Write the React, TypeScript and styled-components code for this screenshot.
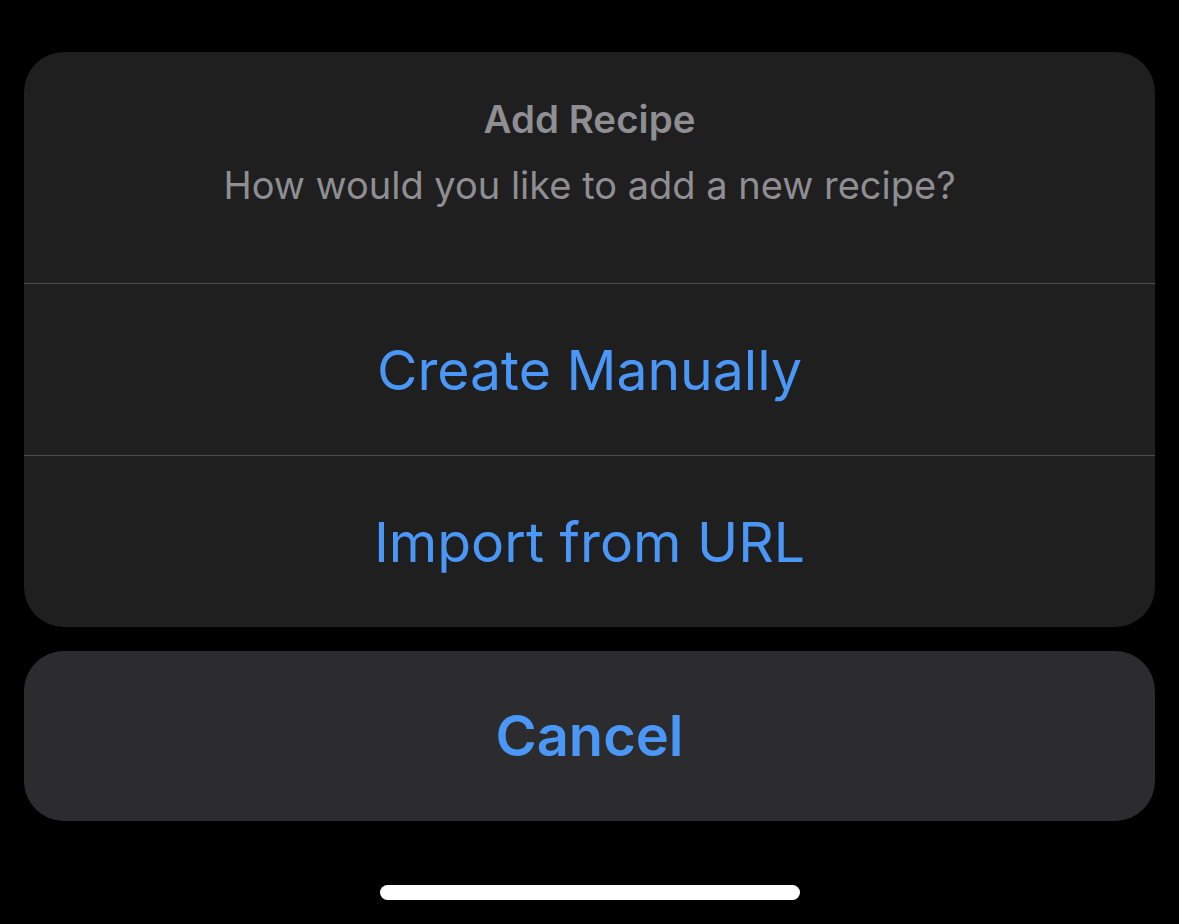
import React from 'react';
import styled, { createGlobalStyle } from 'styled-components';

const GlobalStyle = createGlobalStyle`
  html, body {
    margin: 0;
    padding: 0;
    background: #000;
  }
  body {
    font-family: Inter, "Noto Sans", "Liberation Sans", sans-serif;
    -webkit-font-smoothing: antialiased;
  }
`;

const Screen = styled.div`
  width: 1179px;
  height: 924px;
  background: #000;
  box-sizing: border-box;
  padding: 52px 24px 0;
  display: flex;
  flex-direction: column;
`;

const Sheet = styled.div`
  background: #1f1f1f;
  border-radius: 40px;
  overflow: hidden;
  display: flex;
  flex-direction: column;
`;

const Header = styled.div`
  height: 232px;
  box-sizing: border-box;
  padding-top: 44px;
  display: flex;
  flex-direction: column;
  align-items: center;
  border-bottom: 1px solid #4b4b4d;
`;

const Title = styled.div`
  font-size: 38.5px;
  font-weight: 600;
  color: #8e8e93;
  line-height: 46px;
`;

const Message = styled.div`
  margin-top: 20px;
  font-size: 38px;
  font-weight: 400;
  color: #8e8e93;
  line-height: 46px;
`;

const Action = styled.button<{ $divider?: boolean; $bold?: boolean; $h?: number }>`
  all: unset;
  height: ${p => p.$h ?? 171}px;
  display: flex;
  align-items: center;
  justify-content: center;
  font-family: Inter, "Noto Sans", "Liberation Sans", sans-serif;
  font-size: ${p => (p.$bold ? 56 : 55.3)}px;
  font-weight: ${p => (p.$bold ? 600 : 400)};
  color: #4a97f8;
  border-bottom: ${p => (p.$divider ? '1px solid #4b4b4d' : 'none')};
  box-sizing: border-box;
  cursor: pointer;
`;

const CancelCard = styled.div`
  margin-top: 24px;
  background: #2c2c2e;
  border-radius: 40px;
  overflow: hidden;
  display: flex;
  flex-direction: column;
`;

const HomeBar = styled.div`
  align-self: center;
  margin-top: 64px;
  width: 420px;
  height: 15px;
  border-radius: 8px;
  background: #fff;
`;

export default function App() {
  return (
    <>
      <GlobalStyle />
      <Screen>
        <Sheet>
          <Header>
            <Title>Add Recipe</Title>
            <Message>How would you like to add a new recipe?</Message>
          </Header>
          <Action $divider $h={172}>Create Manually</Action>
          <Action $h={171}>Import from URL</Action>
        </Sheet>
        <CancelCard>
          <Action $bold $h={170}>Cancel</Action>
        </CancelCard>
        <HomeBar />
      </Screen>
    </>
  );
}
